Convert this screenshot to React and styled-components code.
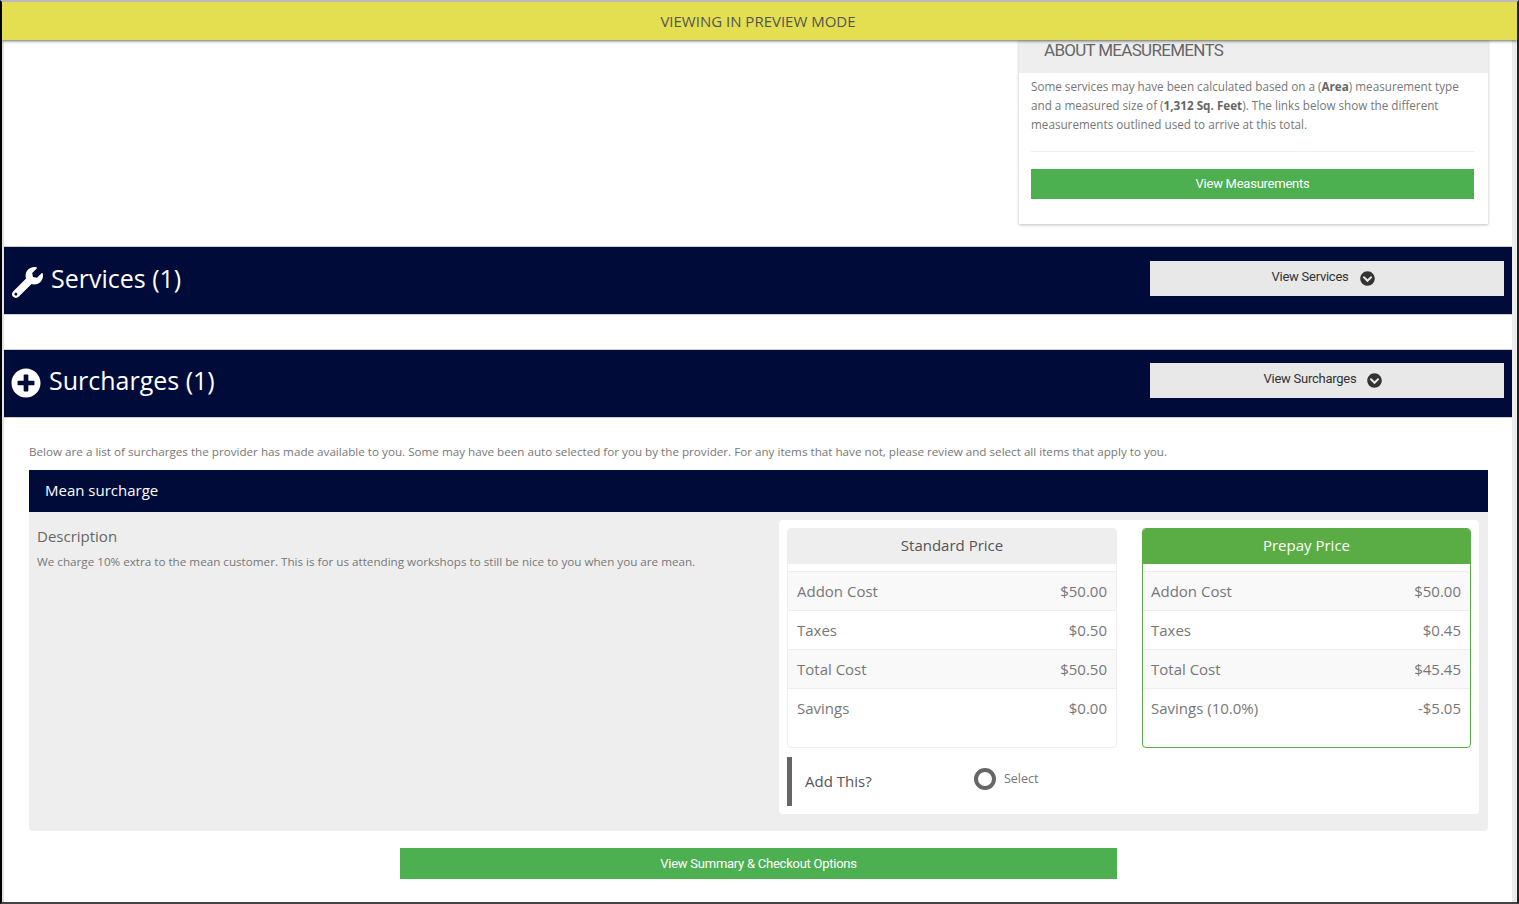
import React from "react";
import styled, {createGlobalStyle} from "styled-components";
import {FaWrench, FaPlusCircle, FaChevronCircleDown} from "react-icons/fa";

const GlobalStyle = createGlobalStyle`
  html, body {
    margin: 0;
    padding: 0;
    background: #fff;
    overflow: hidden;
  }
  * {
    box-sizing: border-box;
  }
`;

const Frame = styled.div`
  width: 1519px;
  height: 904px;
  border: 2px solid #000;
  border-top-color: #bbb;
  border-right-color: #222;
  border-bottom-color: #444;
  overflow: hidden;
  font-family: "Open Sans", sans-serif;
  color: #666;
  background: #fff;
  display: flex;
  flex-direction: column;
`;

const PreviewBar = styled.div`
  position: relative;
  z-index: 2;
  flex: none;
  height: 38px;
  background: #e3df50;
  color: #555;
  font-size: 15px;
  line-height: 39px;
  text-align: center;
  padding-right: 3px;
  box-shadow: 0 1px 3px rgba(0, 0, 0, 0.6);
`;

const Viewport = styled.div`
  flex: 1;
  display: flex;
`;

const Page = styled.div`
  width: 1510px;
  border-left: 2px solid #e2e2e2;
`;

const ScrollTrack = styled.div`
  width: 5px;
  background: #ececec;
`;

const TopRow = styled.div`
  display: flex;
  justify-content: flex-end;
  padding-right: 24px;
`;

const AboutCard = styled.div`
  width: 469px;
  height: 184px;
  background: #fff;
  box-shadow: 0 1px 3px rgba(0, 0, 0, 0.25);
`;

const AboutHeader = styled.div`
  height: 33px;
  background: #eee;
  padding-left: 25px;
  font-family: Roboto, sans-serif;
  font-size: 17px;
  letter-spacing: -0.7px;
  line-height: 21px;
  color: #666;
`;

const AboutBody = styled.div`
  padding: 4px 14px 0 12px;
`;

const AboutText = styled.p`
  margin: 0;
  font-size: 11.7px;
  line-height: 19px;
  color: #777;
  padding-bottom: 17px;
  border-bottom: 1px solid #eee;
  margin-bottom: 17px;

  b {
    color: #666;
  }
`;

const GreenButton = styled.div`
  width: ${(props) => props.width || "100%"};
  height: ${(props) => props.height || "30px"};
  padding-bottom: ${(props) => props.lift || "2px"};
  background: #4caf50;
  color: #fff;
  font-family: Roboto, sans-serif;
  font-size: 13px;
  letter-spacing: -0.25px;
  display: flex;
  align-items: center;
  justify-content: center;
`;

const SectionBar = styled.div`
  margin-top: ${(props) => props.top};
  width: 1508px;
  height: 69px;
  background: #000b39;
  border-top: 1px solid #ccc;
  border-bottom: 1px solid #ccc;
  display: flex;
  align-items: center;
  justify-content: space-between;
  padding: 0 8px ${(props) => props.lift || "0"};
  color: #fff;
`;

const SectionTitle = styled.div`
  display: flex;
  align-items: center;
  gap: 8px;
  font-size: 25px;
  line-height: 34px;
  color: #fff;

  svg {
    display: block;
  }
`;

const TitleText = styled.span`
  margin-bottom: 6px;
`;

const WrenchIcon = styled(FaWrench)`
  margin-top: 4px;
`;

const PlusIcon = styled(FaPlusCircle)`
  margin-left: -1px;
`;

const ToggleButton = styled.div`
  width: 354px;
  height: 35px;
  margin-top: -4px;
  padding-right: 8px;
  background: #e8e8e8;
  color: #333;
  font-family: Roboto, sans-serif;
  font-size: 13px;
  letter-spacing: -0.25px;
  display: flex;
  align-items: center;
  justify-content: center;
  gap: 11px;

  span {
    margin-bottom: 5px;
  }

  svg {
    color: #333;
  }
`;

const Content = styled.div`
  padding: 0 24px 0 25px;
`;

const Intro = styled.p`
  margin: 25px 0 10px;
  font-size: 11.67px;
  line-height: 17px;
  color: #777;
  white-space: nowrap;
`;

const ItemHeader = styled.div`
  height: 42px;
  background: #000b39;
  color: #fff;
  font-size: 15px;
  line-height: 41px;
  padding-left: 16px;
`;

const ItemBody = styled.div`
  height: 319px;
  background: #eee;
  border-radius: 0 0 4px 4px;
  display: flex;
  justify-content: space-between;
  padding: 8px 9px 0 8px;
`;

const Description = styled.div`
  width: 720px;
`;

const DescTitle = styled.div`
  font-size: 15px;
  line-height: 20px;
  margin-top: 6px;
  color: #666;
`;

const DescText = styled.div`
  font-size: 11.67px;
  line-height: 17px;
  margin-top: 7px;
  color: #777;
`;

const PricePanel = styled.div`
  width: 700px;
  height: 294px;
  background: #fff;
  border-radius: 4px;
  padding: 8px;
`;

const PriceCols = styled.div`
  display: flex;
  gap: 25px;
`;

const PriceCard = styled.div`
  width: ${(props) => (props.$prepay ? "329px" : "330px")};
  height: 220px;
  border-radius: 4px;
  border: 1px solid ${(props) => (props.$prepay ? "#5aac44" : "#eee")};
  overflow: hidden;
`;

const PriceHead = styled.div`
  margin: -1px -1px 7px;
  height: 36px;
  background: ${(props) => (props.$prepay ? "#5aac44" : "#eee")};
  color: ${(props) => (props.$prepay ? "#fff" : "#555")};
  font-size: 15px;
  line-height: 35px;
  text-align: center;
`;

const PriceRow = styled.div`
  height: 39px;
  border-top: 1px solid #eee;
  background: ${(props) => (props.$striped ? "#f9f9f9" : "#fff")};
  display: flex;
  justify-content: space-between;
  padding: 0 9px 0 ${(props) => (props.$prepay ? "8px" : "9px")};
  font-size: 15px;
  line-height: 38px;
  color: #777;
`;

const AddRow = styled.div`
  margin-top: 9px;
  height: 49px;
  width: 330px;
  border-left: 5px solid #666;
  padding-left: 13px;
  display: flex;
  align-items: center;
  font-size: 15px;
  color: #555;
`;

const AddLabel = styled.div`
  width: 169px;
  margin-bottom: 2px;
`;

const SelectOption = styled.div`
  display: flex;
  align-items: center;
  gap: 8px;
  margin-top: -6px;
  font-size: 12.5px;
  color: #777;
`;

const Radio = styled.span`
  width: 22px;
  height: 22px;
  border: 4px solid #666;
  border-radius: 50%;
  background: #fff;
`;

const Footer = styled.div`
  display: flex;
  padding: 17px 0 0 371px;
`;

const rows = (values, savingsLabel) => [
    ["Addon Cost", values[0]],
    ["Taxes", values[1]],
    ["Total Cost", values[2]],
    [savingsLabel, values[3]],
];

const PriceTable = ({title, prepay, data}) => (
    <PriceCard $prepay={prepay}>
        <PriceHead $prepay={prepay}>{title}</PriceHead>
        {data.map(([label, value], i) => (
            <PriceRow key={label} $striped={i % 2 === 0} $prepay={prepay}>
                <span>{label}</span>
                <span>{value}</span>
            </PriceRow>
        ))}
    </PriceCard>
);

export default function App() {
    return (
        <Frame>
            <GlobalStyle/>
            <PreviewBar>VIEWING IN PREVIEW MODE</PreviewBar>
            <Viewport>
                <Page>
                    <TopRow>
                        <AboutCard>
                            <AboutHeader>ABOUT MEASUREMENTS</AboutHeader>
                            <AboutBody>
                                <AboutText>
                                    Some services may have been calculated based on a (<b>Area</b>) measurement type
                                    and a measured size of (<b>1,312 Sq. Feet</b>). The links below show the different
                                    measurements outlined used to arrive at this total.
                                </AboutText>
                                <GreenButton>View Measurements</GreenButton>
                            </AboutBody>
                        </AboutCard>
                    </TopRow>
                    <SectionBar top="22px">
                        <SectionTitle>
                            <WrenchIcon size={31}/>
                            <TitleText>Services (1)</TitleText>
                        </SectionTitle>
                        <ToggleButton>
                            <span>View Services</span>
                            <FaChevronCircleDown size={15}/>
                        </ToggleButton>
                    </SectionBar>
                    <SectionBar top="34px" lift="2px">
                        <SectionTitle>
                            <PlusIcon size={30}/>
                            <TitleText>Surcharges (1)</TitleText>
                        </SectionTitle>
                        <ToggleButton>
                            <span>View Surcharges</span>
                            <FaChevronCircleDown size={15}/>
                        </ToggleButton>
                    </SectionBar>
                    <Content>
                        <Intro>
                            Below are a list of surcharges the provider has made available to you. Some may have been
                            auto selected for you by the provider. For any items that have not, please review and select
                            all items that apply to you.
                        </Intro>
                        <ItemHeader>Mean surcharge</ItemHeader>
                        <ItemBody>
                            <Description>
                                <DescTitle>Description</DescTitle>
                                <DescText>
                                    We charge 10% extra to the mean customer. This is for us attending workshops to
                                    still be nice to you when you are mean.
                                </DescText>
                            </Description>
                            <PricePanel>
                                <PriceCols>
                                    <PriceTable title="Standard Price"
                                                data={rows(["$50.00", "$0.50", "$50.50", "$0.00"], "Savings")}/>
                                    <PriceTable title="Prepay Price" prepay
                                                data={rows(["$50.00", "$0.45", "$45.45", "-$5.05"], "Savings (10.0%)")}/>
                                </PriceCols>
                                <AddRow>
                                    <AddLabel>Add This?</AddLabel>
                                    <SelectOption>
                                        <Radio/>
                                        Select
                                    </SelectOption>
                                </AddRow>
                            </PricePanel>
                        </ItemBody>
                        <Footer>
                            <GreenButton width="717px" height="31px" lift="0">
                                View Summary &amp; Checkout Options
                            </GreenButton>
                        </Footer>
                    </Content>
                </Page>
                <ScrollTrack/>
            </Viewport>
        </Frame>
    );
}
